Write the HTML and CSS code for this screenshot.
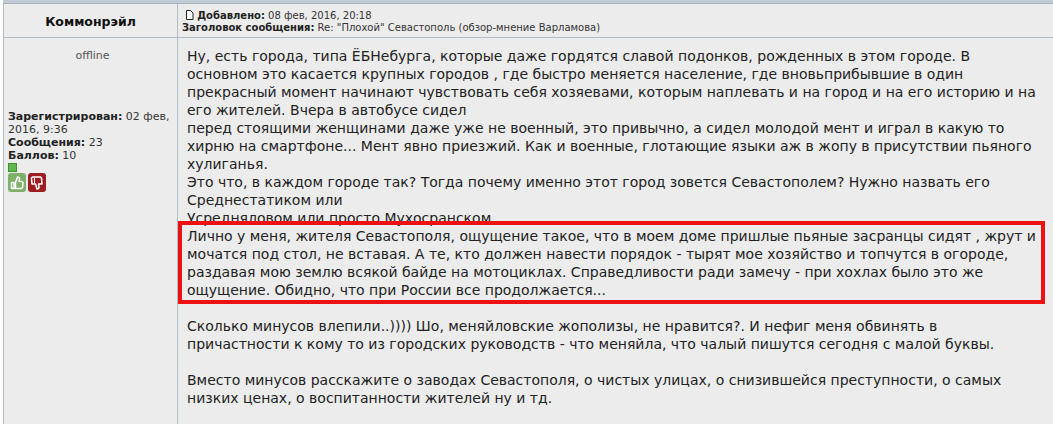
FILE: index.html
```html
<!DOCTYPE html>
<html lang="ru">
<head>
    <meta charset="UTF-8">
    <title>Коммонрэйл</title>
    <link rel="stylesheet" href="styles.css">
</head>
<body>
    <div class="topbar"></div>
    <div class="post">
        <div class="post-head">
            <div class="author-name">Коммонрэйл</div>
            <div class="post-meta">
                <div>
                    <svg class="doc-icon" width="9" height="10" viewBox="0 0 9 10">
                        <path d="M1.500 .5h4l2.500 2.500v6.500h-6.500z" fill="#fff" stroke="#222"/>
                    </svg>
                    <b>Добавлено:</b> 08 фев, 2016, 20:18
                </div>
                <div><b>Заголовок сообщения:</b> Re: "Плохой" Севастополь (обзор-мнение Варламова)</div>
            </div>
        </div>
        <div class="post-body">
            <div class="author-info">
                <div class="status">offline</div>
                <div class="stats">
                    <b>Зарегистрирован:</b> 02 фев, 2016, 9:36<br>
                    <b>Сообщения:</b> 23<br>
                    <b>Баллов:</b> 10
                </div>
                <div class="rank"></div>
                <div class="votes">
                    <span class="vote vote-up">
                        <svg width="14" height="14" viewBox="0 0 14 14">
                            <path d="M1.500 6.500h2.500v6h-2.500z" fill="none" stroke="#fff" stroke-width="1.500" stroke-linejoin="round"/>
                            <path d="M5.500 6.500l2-5.500c1.500 0 2 1 2 2l-.5 2.500h3l1 1-.5 5-1 1h-6z" fill="none" stroke="#fff" stroke-width="1.500" stroke-linejoin="round"/>
                        </svg>
                    </span>
                    <span class="vote vote-down">
                        <svg width="14" height="14" viewBox="0 0 14 14">
                            <path d="M1.500 2l1-1h8l1 1 .5 6h-3.500l.5 3c0 1-.5 2-2 2l-1.500-5h-3.500z" fill="none" stroke="#fff" stroke-width="1.500" stroke-linejoin="round"/>
                            <path d="M4.500 2v5" stroke="#fff" stroke-width="1"/>
                        </svg>
                    </span>
                </div>
            </div>
            <div class="post-text">
                Ну, есть города, типа ЁБНебурга, которые даже гордятся славой подонков, рожденных в этом городе. В<br>
                основном это касается крупных городов , где быстро меняется население, где вновьприбывшие в один<br>
                прекрасный момент начинают чувствовать себя хозяевами, которым наплевать и на город и на его историю и на<br>
                его жителей. Вчера в автобусе сидел<br>
                перед стоящими женщинами даже уже не военный, это привычно, а сидел молодой мент и играл в какую то<br>
                хирню на смартфоне... Мент явно приезжий. Как и военные, глотающие языки аж в жопу в присутствии пьяного<br>
                хулиганья.<br>
                Это что, в каждом городе так? Тогда почему именно этот город зовется Севастополем? Нужно назвать его<br>
                Среднестатиком или<br>
                Усредняловом или просто Мухосранском
                <div class="marked">
                    Лично у меня, жителя Севастополя, ощущение такое, что в моем доме пришлые пьяные засранцы сидят , жрут и<br>
                    мочатся под стол, не вставая. А те, кто должен навести порядок - тырят мое хозяйство и топчутся в огороде,<br>
                    раздавая мою землю всякой байде на мотоциклах. Справедливости ради замечу - при хохлах было это же<br>
                    ощущение. Обидно, что при России все продолжается...
                    <div class="marked-frame"></div>
                </div>
                <br>
                Сколько минусов влепили..)))) Шо, меняйловские жополизы, не нравится?. И нефиг меня обвинять в<br>
                причастности к кому то из городских руководств - что меняйла, что чалый пишутся сегодня с малой буквы.<br>
                <br>
                Вместо минусов расскажите о заводах Севастополя, о чистых улицах, о снизившейся преступности, о самых<br>
                низких ценах, о воспитанности жителей ну и тд.
            </div>
        </div>
    </div>
</body>
</html>
```

FILE: styles.css
```css
html, body {
    height: 100%;
}

body {
    margin: 0;
    overflow: hidden;
    background: #fff;
    color: #222;
    font-family: "DejaVu Sans", Verdana, sans-serif;
    display: flex;
    flex-direction: column;
}

.topbar {
    height: 3px;
    margin-left: 3px;
    background: #c2ccd6;
    border-bottom: 1px solid #a3b0bc;
}

.post {
    flex: 1;
    margin-left: 3px;
    border-left: 1px solid #b0bcc8;
    background: #ececec;
    display: flex;
    flex-direction: column;
}

.post-head {
    height: 33px;
    border-bottom: 1px solid #b0bcc8;
    display: flex;
}

.author-name {
    width: 173px;
    border-right: 1px solid #b0bcc8;
    font-size: 12.500px;
    font-weight: bold;
    line-height: 35px;
    text-align: center;
    color: #111;
}

.post-meta {
    padding: 6px 0 0 4px;
    font-size: 10px;
    line-height: 12px;
    color: #333;
}

.post-meta b {
    color: #222;
}

.doc-icon {
    margin-left: 3px;
    vertical-align: -1px;
}

.post-body {
    flex: 1;
    display: flex;
}

.author-info {
    width: 169px;
    flex-shrink: 0;
    padding: 11px 0 0 4px;
    border-right: 1px solid #b0bcc8;
    font-size: 11px;
    line-height: 13px;
    color: #333;
}

.status {
    text-align: center;
    color: #555;
    margin-bottom: 48px;
}

.stats b {
    color: #222;
}

.rank {
    width: 7px;
    height: 7px;
    margin-top: 1px;
    border: 1px solid #3f8f2f;
    background: #62b84c;
}

.votes {
    display: flex;
    gap: 2px;
    margin-top: 1px;
}

.vote {
    width: 18px;
    height: 19px;
    border-radius: 3px;
    display: flex;
    align-items: center;
    justify-content: center;
}

.vote-up {
    background: #7fb069;
}

.vote-down {
    background: #9c1c20;
}

.post-text {
    flex: 1;
    padding: 9px 0 0 9px;
    font-size: 14px;
    line-height: 18px;
    white-space: nowrap;
    color: #222;
}

.marked {
    position: relative;
}

.marked-frame {
    position: absolute;
    top: -6px;
    left: -9px;
    right: 8px;
    bottom: -5px;
    border: 4px solid #ee1111;
}
```
